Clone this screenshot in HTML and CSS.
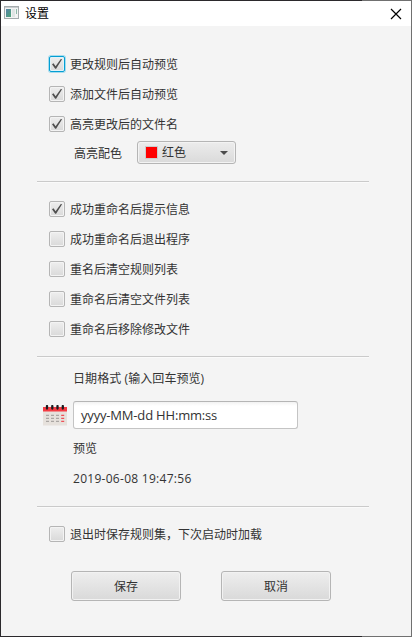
FILE: index.html
```html
<!DOCTYPE html>
<html lang="zh-CN">
<head>
<meta charset="utf-8">
<title>设置</title>
<link rel="stylesheet" href="styles.css">
</head>
<body>
<div class="window">
  <header class="titlebar">
    <svg class="app-icon" width="15" height="13" viewBox="0 0 15 13">
      <defs><linearGradient id="g" x1="0" y1="0" x2="1" y2="1"><stop offset="0" stop-color="#5583a8"/><stop offset="1" stop-color="#4fa577"/></linearGradient></defs>
      <rect x=".5" y=".5" width="14" height="12" fill="#f3f3f3" stroke="#a5abad"/>
      <path d="M1 1.5h13" stroke="#c8cdcf"/>
      <rect x="2" y="3" width="5" height="8" fill="url(#g)"/>
      <rect x="8" y="3" width="3" height="8" fill="#dfe5e4"/>
      <rect x="12" y="3" width="1" height="5" fill="#8fb9a9"/>
    </svg>
    <h1 class="title">设置</h1>
    <svg class="close" width="12" height="12" viewBox="0 0 12 12"><path d="M1 1l10 10M11 1L1 11" stroke="#000" stroke-width="1.2"/></svg>
  </header>
  <main class="content">
    <section class="group first">
      <label class="row"><span class="box focused"><svg width="14" height="14" viewBox="0 0 14 14"><path class="tick" d="M2 7.2L3.5 6.3l2.1 3L10.8 1.9l1.3.4L6.1 11.8H5.2z"/></svg></span><span class="text">更改规则后自动预览</span></label>
      <label class="row"><span class="box"><svg width="14" height="14" viewBox="0 0 14 14"><path class="tick" d="M2 7.2L3.5 6.3l2.1 3L10.8 1.9l1.3.4L6.1 11.8H5.2z"/></svg></span><span class="text">添加文件后自动预览</span></label>
      <label class="row"><span class="box"><svg width="14" height="14" viewBox="0 0 14 14"><path class="tick" d="M2 7.2L3.5 6.3l2.1 3L10.8 1.9l1.3.4L6.1 11.8H5.2z"/></svg></span><span class="text">高亮更改后的文件名</span></label>
      <div class="color-row"><span class="text">高亮配色</span><div class="combo"><i class="swatch"></i><span class="text">红色</span><i class="arrow"></i></div></div>
    </section>
    <section class="group second">
      <label class="row"><span class="box"><svg width="14" height="14" viewBox="0 0 14 14"><path class="tick" d="M2 7.2L3.5 6.3l2.1 3L10.8 1.9l1.3.4L6.1 11.8H5.2z"/></svg></span><span class="text">成功重命名后提示信息</span></label>
      <label class="row"><span class="box"></span><span class="text">成功重命名后退出程序</span></label>
      <label class="row"><span class="box"></span><span class="text">重名后清空规则列表</span></label>
      <label class="row"><span class="box"></span><span class="text">重命名后清空文件列表</span></label>
      <label class="row"><span class="box"></span><span class="text">重命名后移除修改文件</span></label>
    </section>
    <section class="group dates">
      <div class="line heading">日期格式 (输入回车预览)</div>
      <div class="field-row">
        <svg class="calendar" width="24" height="21" viewBox="0 0 24 21">
          <path d="M0 6h24v14.5H0z" fill="#e6e1dc"/>
          <path d="M0 2h24v4.5H0z" fill="#f43b43"/>
          <path d="M4 1v2.5M9.3 1v2.5M14.5 1v2.5M19.8 1v2.5" stroke="#1b1b1f" stroke-width="2.3" stroke-linecap="round"/>
          <path d="M3 10.3h3M8 10.3h3M13 10.3h3M3 13.3h3M8 13.3h3M13 13.3h3M3 16.4h3M8 16.4h3M13 16.4h3" stroke="#aaa6a3" stroke-width="1.2"/>
          <path d="M18.2 10.3h3M18.2 13.3h3M18.2 16.4h3" stroke="#ef4f58" stroke-width="1.3"/>
        </svg>
        <div class="field">yyyy-MM-dd HH:mm:ss</div>
      </div>
      <div class="line preview">预览</div>
      <div class="line value">2019-06-08 19:47:56</div>
    </section>
    <section class="group last">
      <label class="row"><span class="box"></span><span class="text">退出时保存规则集，下次启动时加载</span></label>
    </section>
    <footer class="actions"><button class="button">保存</button><button class="button">取消</button></footer>
  </main>
</div>
</body>
</html>
```
FILE: styles.css
```css
* { box-sizing: border-box; }
body {
  margin: 0;
  font: 12px/16px "Open Sans", "Noto Sans CJK SC", sans-serif;
  color: #333;
}
.window {
  width: 412px;
  height: 637px;
  padding: 1px;
  background: linear-gradient(90deg, #2b292c 362px, #707070 362px);
}
.titlebar {
  height: 25px;
  display: flex;
  align-items: center;
  padding: 0 9px 0 3px;
  background: #fff;
}
.app-icon { margin-bottom: 2px; }
.title {
  flex: 1;
  margin: 0 0 0 6px;
  font-size: 12px;
  font-weight: 400;
  color: #000;
}
.content {
  height: 610px;
  padding: 23px 42px 0 36px;
  background: #f4f4f4;
}
.group { padding-left: 12px; border-bottom: 1px solid #cacaca; box-shadow: 0 1px #fafafa; }
.first { height: 133px; }
.second { height: 175px; padding-top: 12px; }
.dates { height: 150px; padding-left: 6px; }
.last { padding-top: 12px; border: 0; box-shadow: none; }
.row { display: flex; align-items: center; height: 30px; gap: 5px; }
.text { padding-top: 2px; }
.box {
  width: 16px;
  height: 16px;
  border: 1px solid #b5b5b5;
  border-radius: 2px;
  background: linear-gradient(#eee, #d9d9d9);
  box-shadow: inset 0 0 0 1px #f3f3f3;
}
.box svg { display: block; }
.focused { border-color: #039ed3; box-shadow: 0 0 0 1px #a6dcee, inset 0 0 0 1px #e2f2f8; }
.tick { fill: #4f4f4f; }
.color-row { display: flex; align-items: center; height: 23px; margin: 2px 0 0 25px; gap: 15px; }
.combo {
  display: flex;
  align-items: center;
  width: 99px;
  height: 23px;
  padding: 0 7px 0 8px;
  border: 1px solid #b5b5b5;
  border-radius: 3px;
  background: linear-gradient(#ececec, #dadada);
  box-shadow: inset 0 0 0 1px #f3f3f3;
}
.combo .text { padding-top: 1px; }
.swatch { width: 11px; height: 11px; margin: 0 5px 0 0; background: #f00; box-shadow: 0 0 0 1px #ccc; }
.arrow { margin-left: auto; border: 4px solid transparent; border-top-color: #4c4c4c; border-bottom: 0; }
.line { padding-left: 30px; line-height: 16px; }
.heading { padding-top: 14px; letter-spacing: .08px; }
.field-row { display: flex; align-items: center; gap: 6px; margin-top: 14px; }
.field {
  width: 225px;
  height: 28px;
  padding: 0 7px;
  border: 1px solid #c4c4c4;
  border-top-color: #b5b5b5;
  border-radius: 3px;
  background: linear-gradient(#f2f2f2, #fff 4px);
  font-size: 13px;
  line-height: 27px;
  letter-spacing: -.18px;
}
.preview { margin-top: 12px; }
.value { margin-top: 14px; letter-spacing: .28px; }
.actions { display: flex; gap: 40px; padding: 22px 0 0 34px; }
.button {
  width: 110px;
  height: 30px;
  padding: 2px 0 0;
  border: 1px solid #b5b5b5;
  border-radius: 3px;
  background: linear-gradient(#eee, #d9d9d9);
  box-shadow: inset 0 0 0 1px #f2f2f2;
  color: #333;
  font: inherit;
}
```
